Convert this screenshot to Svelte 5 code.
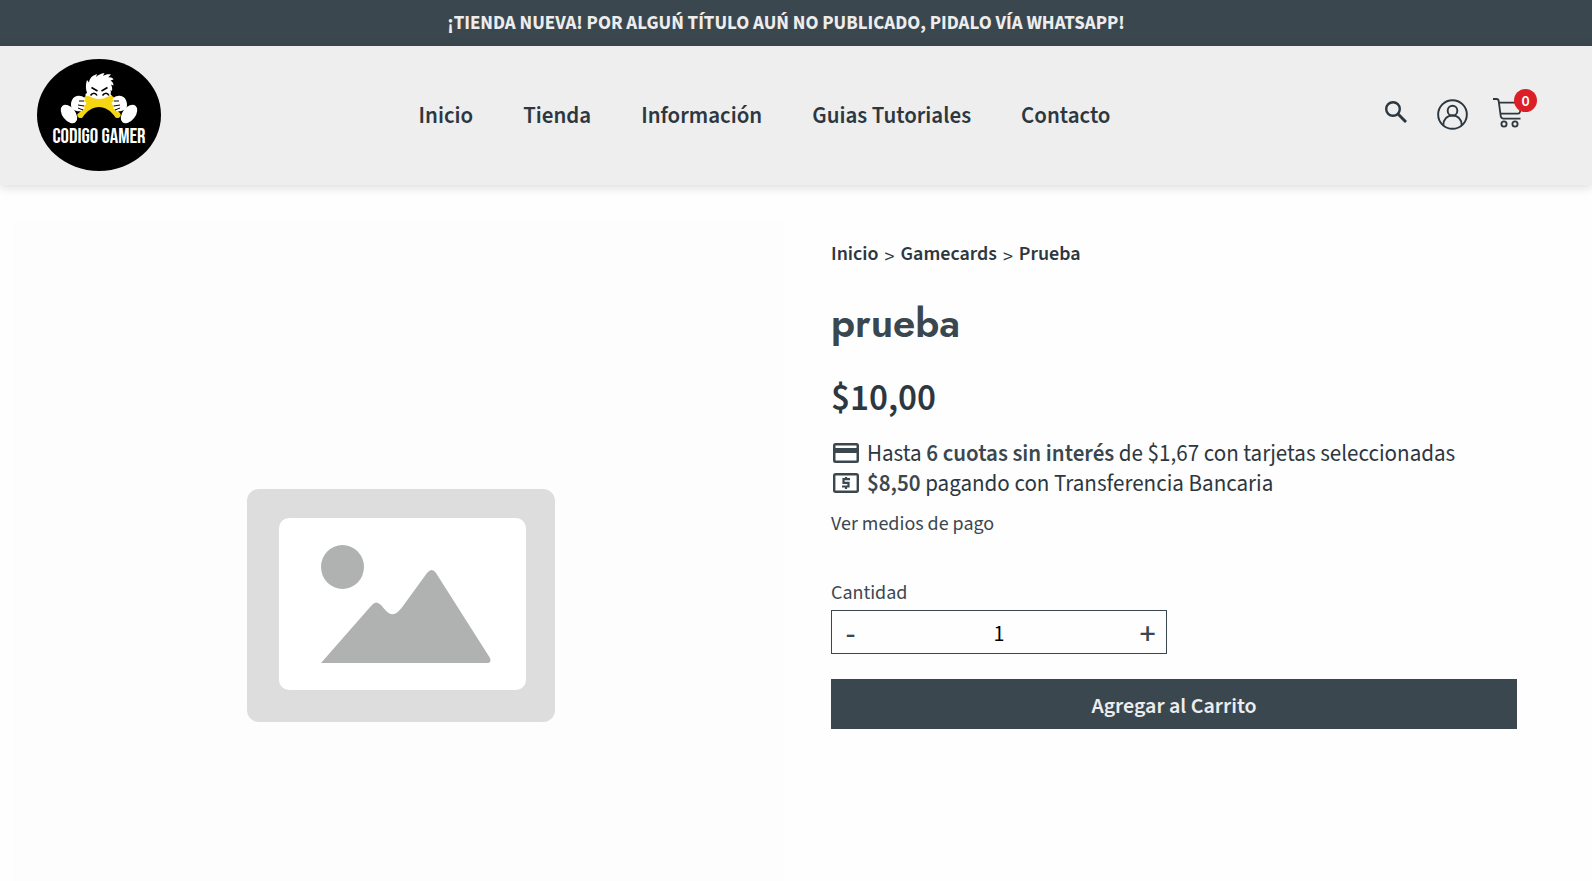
<script lang="ts">
	const links = ['Inicio', 'Tienda', 'Información', 'Guias Tutoriales', 'Contacto'];

	let quantity = $state(1);
	let cartCount = $state(0);

	function decrease() {
		if (quantity > 1) quantity -= 1;
	}

	function increase() {
		quantity += 1;
	}

	function addToCart(event: SubmitEvent) {
		event.preventDefault();
		cartCount += quantity;
	}
</script>

<div class="adbar">¡TIENDA NUEVA! POR ALGUŃ TÍTULO AUŃ NO PUBLICADO, PIDALO VÍA WHATSAPP!</div>

<header class="header">
	<a class="logo" href="/" aria-label="Codigo Gamer">
		<svg viewBox="0 0 124 112" width="124" height="112">
			<ellipse cx="62" cy="56" rx="62" ry="56" fill="#000" />
			<!-- head -->
			<path
				fill="#fff"
				d="M48.500 38V35l1.500-1c-1.500-4-1.500-9 0-13l2 2.500c.5-4 3-7 8-8.500l-1 3c2-2 5-3.500 8.500-4l-1.500 3c2.500-1.500 5-2 8-1.500l-3 3c3-.5 4.500.5 5.500 2l-3 1c2 1 3 3 3 5l-2.500-1c1 2 1.500 4 1 6.500l-1.500-1c.5 2 .5 3 0 4l1.500 2v2l-13 2z"
			/>
			<path fill="none" stroke="#000" stroke-width="1.600" d="M54.500 28.500l6 3.500M70.500 28.500L64.500 32M53.500 36.500c2-3 5-3 6.500 0M65.500 36.500c2-3 5-3 6.500 0" />
			<!-- controller -->
			<path
				fill="#f6d513"
				d="M46 40c1-3 5-4 8-2 4 2.500 12 2.500 16 0 4-2 7-1 8 2 .5 2-1 4-1 6 1 4 5 6 6.500 9 1 3-2 5-5 3.500-9-14-24-14-33 0-3 1.500-6-.5-5-3.500 3-2 6-5 6.500-9 0-2-1.500-4-1-6z"
			/>
			<!-- hands -->
			<path
				fill="#fff"
				d="M34 46c0-6 4-10 9-9 3 0 5 2 5.500 4l-2 .5 3 2.500-1 2-2 .5 1.500 3-2.500.5-.5 2c-6 1-11-1-11-6zM90 46c0-6-4-10-9-9-3 0-5 2-5.500 4l2 .5-3 2.500 1 2 2 .5-1.500 3 2.500.5.5 2c6 1 11-1 11-6z"
			/>
			<path fill="none" stroke="#000" d="M42 42l5 0M41 46l6 1M41 49l5 2M82 42l-5 0M83 46l-6 1M83 49l-5 2" />
			<!-- feet -->
			<ellipse cx="32" cy="55" rx="6.500" ry="10.500" fill="#fff" transform="rotate(-38 32 55)" />
			<ellipse cx="92" cy="55" rx="6.500" ry="10.500" fill="#fff" transform="rotate(38 92 55)" />
			<text x="62" y="84" text-anchor="middle" class="logo-text">CODIGO GAMER</text>
		</svg>
	</a>

	<nav class="nav">
		{#each links as link}
			<a href="/">{link}</a>
		{/each}
	</nav>

	<div class="tools">
		<button class="search" aria-label="Buscar">
			<svg viewBox="0 0 22 22" width="22" height="22" fill="none" stroke="#2d373f">
				<circle cx="8" cy="8" r="6.800" stroke-width="2.400" />
				<path d="M13 13l8 8" stroke-width="3" />
			</svg>
		</button>
		<a class="account" href="/account" aria-label="Mi cuenta">
			<svg viewBox="0 0 32 32" width="31" height="31" fill="none" stroke="#2d373f" stroke-width="2">
				<circle cx="16" cy="16" r="14.800" />
				<circle cx="16" cy="12" r="5" />
				<path d="M6.500 27c0-6 4-10 9.500-10s9.500 4 9.500 10" />
			</svg>
		</a>
		<a class="cart" href="/cart" aria-label="Carrito">
			<svg viewBox="0 0 30 30" width="30" height="30" fill="none" stroke="#2d373f" stroke-width="1.800">
				<path d="M0 1h3.500c1.500 0 2 .6 2.200 2l2 15c.3 2 1 2.600 2.800 2.600h17M6 4.700h22.500l-1.500 9c-.3 1.500-1 2-2 2H7.500" />
				<circle cx="11" cy="26" r="2.600" />
				<circle cx="22" cy="26" r="2.600" />
			</svg>
			<span class="badge">{cartCount}</span>
		</a>
	</div>
</header>

<main class="product">
	<div class="gallery">
		<svg viewBox="0 0 770 770" role="img" aria-label="prueba">
			<rect x="233" y="269" width="308" height="233" rx="12" fill="#ddd" />
			<rect x="265" y="298" width="247" height="172" rx="10" fill="#fff" />
			<ellipse cx="328.500" cy="347" rx="21.500" ry="22" fill="#b0b2b1" />
			<path
				fill="#b0b2b1"
				d="M307 443l50-57q5-7 11 0c8 11 13 11 21 0l24-33q5-6 9 0l54 85q2 5-3 5z"
			/>
		</svg>
	</div>

	<section class="details">
		<nav class="breadcrumbs" aria-label="Ruta">
			<a href="/">Inicio</a><span>&gt;</span><a href="/gamecards">Gamecards</a><span>&gt;</span><a href="/prueba">Prueba</a>
		</nav>

		<h1>prueba</h1>
		<div class="price">$10,00</div>

		<div class="payment">
			<svg viewBox="0 0 26 20" width="26" height="20">
				<path
					fill="#3b474f"
					fill-rule="evenodd"
					d="M2.500 0h21A2.500 2.500 0 0 1 26 2.500v15a2.500 2.500 0 0 1-2.500 2.500h-21A2.500 2.500 0 0 1 0 17.500v-15A2.500 2.500 0 0 1 2.500 0zM2.500 2.500v2.500h21V2.500zM2.500 10v7.500h21V10z"
				/>
			</svg>
			<span>Hasta <b>6 cuotas sin interés</b> de $1,67 con tarjetas seleccionadas</span>
		</div>
		<div class="payment">
			<svg viewBox="0 0 26 20" width="26" height="20" fill="none" stroke="#3b474f">
				<rect x="1.200" y="1.200" width="23.600" height="17.600" rx="1.500" stroke-width="2.400" />
				<path d="M17 6.200h-6.500v3.600h5v3.700H9M13 4v2.500M13 13v3" stroke-width="2.200" />
			</svg>
			<span><b>$8,50</b> pagando con Transferencia Bancaria</span>
		</div>
		<a class="more" href="/pagos">Ver medios de pago</a>

		<form onsubmit={addToCart}>
			<label for="quantity">Cantidad</label>
			<div class="quantity">
				<button type="button" aria-label="Restar" onclick={decrease}>-</button>
				<input id="quantity" type="text" inputmode="numeric" bind:value={quantity} />
				<button type="button" aria-label="Sumar" onclick={increase}>+</button>
			</div>
			<button class="submit" type="submit">Agregar al Carrito</button>
		</form>
	</section>
</main>

<style>
	:global(body) {
		background: #fefefe;
		color: #2d373f;
		font-family: 'Source Sans Pro', 'Source Sans 3', 'Noto Sans CJK SC', sans-serif;
	}

	a {
		color: inherit;
		text-decoration: none;
	}

	button,
	input {
		font: inherit;
		padding: 0;
		border: 0;
		background: none;
		cursor: pointer;
	}

	svg {
		display: block;
	}

	.adbar {
		padding: 10px 20px 8px 0;
		background: #3b474f;
		color: #ededed;
		font-size: 19px;
		font-weight: 700;
		line-height: 28px;
		text-align: center;
	}

	/* Header */
	.header {
		position: relative;
		display: grid;
		grid-template-columns: 1fr auto 1fr;
		align-items: center;
		padding: 13px 55px 14px 37px;
		background: #eee;
		box-shadow: 0 2px 10px rgba(0, 0, 0, 0.15);
	}

	.logo {
		justify-self: start;
	}

	.logo-text {
		fill: #fff;
		font-family: 'Bebas Neue', Oswald, sans-serif;
		font-size: 21px;
		font-weight: 400;
	}

	.nav {
		display: flex;
		gap: 50px;
		padding: 2px 45px 0 0;
		font-size: 23px;
		font-weight: 600;
		line-height: 32px;
	}

	.tools {
		display: flex;
		justify-content: flex-end;
		align-items: center;
		gap: 25px;
	}

	.search {
		padding: 0 5px 6px 0;
	}

	.account {
		padding-bottom: 2px;
	}

	.cart {
		position: relative;
		padding: 0 14px 4px 0;
	}

	.badge {
		position: absolute;
		top: -9px;
		right: 0;
		width: 23px;
		height: 23px;
		border-radius: 50%;
		background: #dc1f26;
		color: #fff;
		font-size: 16px;
		font-weight: 600;
		line-height: 24px;
		text-align: center;
	}

	/* Product */
	.product {
		display: grid;
		grid-template-columns: 1fr 1fr;
		padding-top: 35px;
	}

	.gallery {
		padding: 0 12px 0 14px;
	}

	.gallery svg {
		width: 100%;
		background: #fdfdfd;
	}

	.details {
		padding: 20px 75px 40px 35px;
	}

	.breadcrumbs {
		display: flex;
		gap: 6px;
		font-size: 20px;
		font-weight: 600;
		line-height: 28px;
	}

	.breadcrumbs span {
		padding-top: 3px;
		font-size: 20px;
		font-weight: 400;
	}

	h1 {
		margin: 23px 0 20px;
		color: #3b474f;
		font-family: Jost, Lato, sans-serif;
		font-size: 40px;
		font-weight: 600;
		line-height: 58px;
	}

	.price {
		margin-bottom: 12px;
		font-size: 37px;
		font-weight: 600;
		line-height: 54px;
	}

	.payment {
		display: flex;
		align-items: center;
		gap: 8px;
		padding-left: 2px;
		font-size: 23px;
		line-height: 28px;
	}

	.payment span {
		padding-top: 2px;
	}

	.payment b {
		color: #3b474f;
		font-weight: 600;
	}

	.more {
		display: block;
		margin: 12px 0 41px;
		color: #3b474f;
		font-size: 20px;
		line-height: 28px;
	}

	label {
		display: block;
		margin-bottom: 3px;
		color: #3b474f;
		font-size: 20px;
		line-height: 28px;
	}

	.quantity {
		display: flex;
		box-sizing: border-box;
		width: 49%;
		margin-bottom: 25px;
		border: 1px solid #3b474f;
	}

	.quantity button {
		flex: none;
		width: 37px;
		padding-top: 4px;
		color: #3b474f;
		font-size: 32px;
		font-weight: 500;
		line-height: 38px;
	}

	.quantity input {
		flex: 1;
		box-sizing: border-box;
		min-width: 0;
		height: 42px;
		padding-top: 4px;
		color: #000;
		font-size: 22px;
		text-align: center;
	}

	.submit {
		width: 100%;
		padding-top: 4px;
		background: #3b474f;
		color: #ededed;
		font-size: 22px;
		font-weight: 600;
		line-height: 46px;
	}
</style>
